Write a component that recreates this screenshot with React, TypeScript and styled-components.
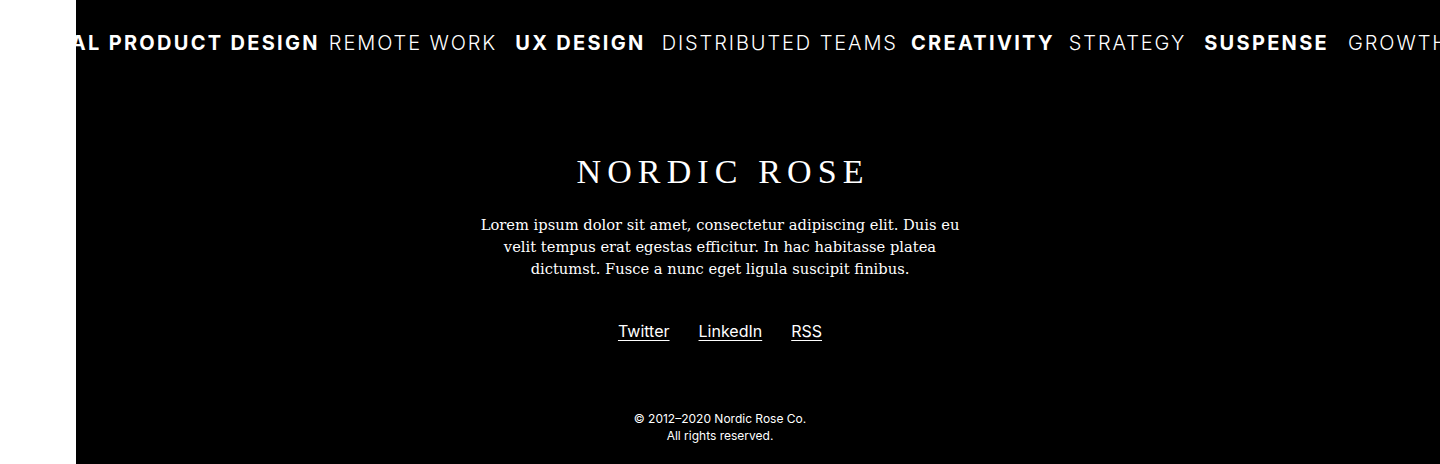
import React from "react";
import styled, { createGlobalStyle } from "styled-components";

const Global = createGlobalStyle`
  html, body { margin: 0; padding: 0; background: #fff; }
  body { font-family: Inter, "Liberation Sans", sans-serif; }
  * { box-sizing: border-box; }
`;

const Page = styled.div`
  display: grid;
  grid-template-columns: 76px 1fr;
  height: 464px;
  background: #fff;
`;

const Footer = styled.footer`
  background: #000;
  color: #fff;
  overflow: hidden;
  display: flex;
  flex-direction: column;
`;

const Marquee = styled.div`
  padding-top: 32px;
  overflow: hidden;
  white-space: nowrap;
`;

const Track = styled.div`
  display: flex;
  align-items: center;
  transform: translateX(-69px);
`;

const Tag = styled.span<{ $bold?: boolean; $gap: number }>`
  font-family: Inter, "Liberation Sans", sans-serif;
  font-size: 20px;
  line-height: 22px;
  letter-spacing: ${(p) => (p.$bold ? "0.115em" : "0.095em")};
  font-weight: ${(p) => (p.$bold ? 700 : 300)};
  text-transform: uppercase;
  margin-right: ${(p) => p.$gap}px;
  flex-shrink: 0;
`;

const Content = styled.div`
  padding-right: 76px;
  display: flex;
  flex-direction: column;
  align-items: center;
  text-align: center;
`;

const Title = styled.h2`
  margin: 98px 0 0;
  font-family: "Liberation Serif", serif;
  font-weight: 400;
  font-size: 34px;
  line-height: 40px;
  letter-spacing: 0.18em;
  margin-right: -0.18em;
`;

const Blurb = styled.p`
  margin: 22px 0 0;
  max-width: 500px;
  font-family: "DejaVu Serif", serif;
  font-size: 14.7px;
  line-height: 22px;
`;

const Links = styled.nav`
  margin-top: 40px;
  display: flex;
  gap: 29px;
`;

const Link = styled.a`
  color: #fff;
  font-family: Inter, "Liberation Sans", sans-serif;
  font-size: 16px;
  line-height: 22px;
  text-decoration: underline;
  text-underline-offset: 3px;
`;

const Copy = styled.p`
  margin: 68px 0 0;
  font-family: Inter, "Liberation Sans", sans-serif;
  font-size: 12px;
  line-height: 17px;
`;

const tags: { text: string; bold?: boolean; gap: number }[] = [
  { text: "Digital Product Design", bold: true, gap: 9 },
  { text: "Remote Work", gap: 18 },
  { text: "UX Design", bold: true, gap: 16 },
  { text: "Distributed Teams", gap: 13 },
  { text: "Creativity", bold: true, gap: 14 },
  { text: "Strategy", gap: 18 },
  { text: "Suspense", bold: true, gap: 19 },
  { text: "Growth", gap: 14 },
  { text: "Digital Product Design", bold: true, gap: 9 },
  { text: "Remote Work", gap: 18 },
];

export default function App() {
  return (
    <>
      <Global />
      <Page>
        <div />
        <Footer>
          <Marquee>
            <Track>
              {tags.map((t, i) => (
                <Tag key={i} $bold={t.bold} $gap={t.gap}>
                  {t.text}
                </Tag>
              ))}
            </Track>
          </Marquee>
          <Content>
            <Title>NORDIC ROSE</Title>
            <Blurb>
              Lorem ipsum dolor sit amet, consectetur adipiscing elit. Duis eu
              velit tempus erat egestas efficitur. In hac habitasse platea
              dictumst. Fusce a nunc eget ligula suscipit finibus.
            </Blurb>
            <Links>
              <Link href="#">Twitter</Link>
              <Link href="#">LinkedIn</Link>
              <Link href="#">RSS</Link>
            </Links>
            <Copy>
              © 2012–2020 Nordic Rose Co.
              <br />
              All rights reserved.
            </Copy>
          </Content>
        </Footer>
      </Page>
    </>
  );
}
